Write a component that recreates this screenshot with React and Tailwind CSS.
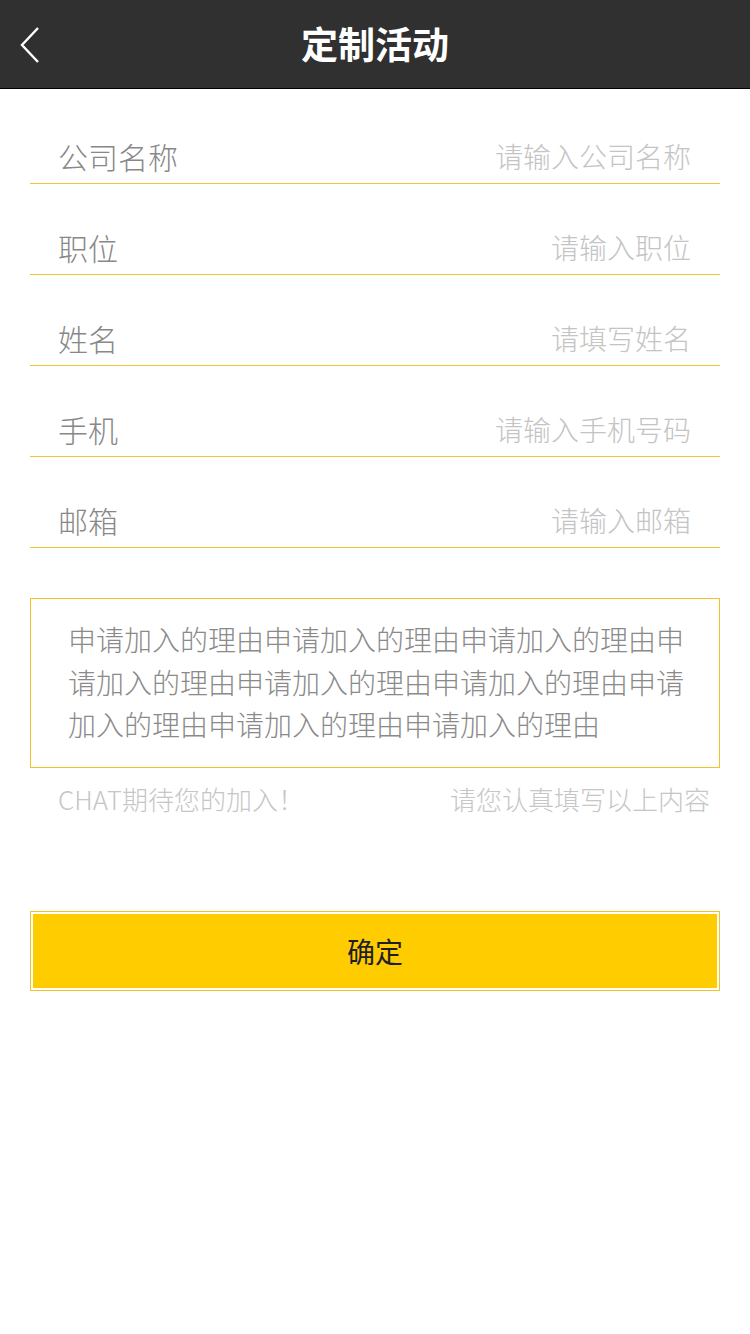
import React from "react";

const fields = [
  { label: "公司名称", placeholder: "请输入公司名称" },
  { label: "职位", placeholder: "请输入职位" },
  { label: "姓名", placeholder: "请填写姓名" },
  { label: "手机", placeholder: "请输入手机号码" },
  { label: "邮箱", placeholder: "请输入邮箱" },
];

export default function App() {
  const reason = "申请加入的理由".repeat(9);

  return (
    <div className="min-h-[1334px] w-[750px] bg-white font-['Noto_Sans_CJK_SC',sans-serif] font-light">
      {/* Header */}
      <div className="relative flex h-[89px] items-center justify-center border-b border-black bg-[#303030]">
        <button className="absolute left-[14px] top-[22px] flex h-[46px] w-[32px] items-center justify-center">
          <svg width="22" height="38" viewBox="0 0 22 38" fill="none">
            <polyline points="19,2 3,19 19,36" stroke="white" strokeWidth="2.4" />
          </svg>
        </button>
        <h1 className="-mt-[2px] text-[37px] font-bold leading-none text-white">定制活动</h1>
      </div>

      {/* Fields */}
      <div className="mx-[30px] mt-[4px]">
        {fields.map((f) => (
          <div
            key={f.label}
            className="flex h-[91px] items-end justify-between border-b border-[#f2c535] pb-[7px] pl-[28px] pr-[29px]"
          >
            <span className="text-[30px] leading-[40px] text-[#888888]">{f.label}</span>
            <span className="text-[28px] leading-[40px] text-[#c4c4c4]">{f.placeholder}</span>
          </div>
        ))}
      </div>

      {/* Reason box */}
      <div className="mx-[30px] mt-[50px] h-[170px] border border-[#f5c225] pl-[37px] pr-[30px] pt-[19px]">
        <p className="text-[28px] leading-[42.5px] text-[#8a8a8a]">{reason}</p>
      </div>
      <div className="mx-[30px] mt-[15px] flex items-center justify-between pl-[28px] pr-[10px]">
        <span className="text-[26px] leading-[32px] text-[#c6c6c6]">CHAT期待您的加入！</span>
        <span className="text-[26px] leading-[32px] text-[#c6c6c6]">请您认真填写以上内容</span>
      </div>

      {/* Submit */}
      <div className="mx-[30px] mt-[96px] border border-[#f5c225] p-[2px]">
        <button className="flex h-[74px] w-full items-center justify-center bg-[#ffcc00] text-[28px] font-normal text-[#1f1f2a]">
          确定
        </button>
      </div>
    </div>
  );
}
